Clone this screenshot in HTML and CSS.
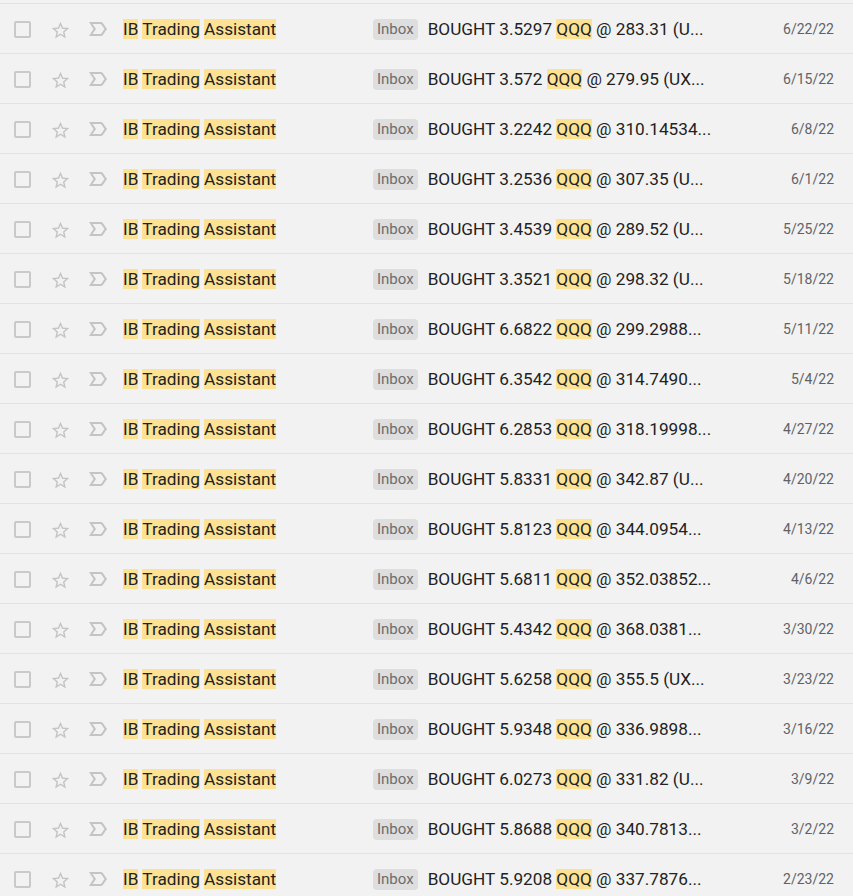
FILE: index.html
```html
<!DOCTYPE html>
<html>
<head>
<meta charset="utf-8">
<link rel="stylesheet" href="styles.css">
</head>
<body>
<div class="list">
  <div class="top-edge"></div>
  <div id="rows"></div>
</div>
<script>
var data = [
["3.5297","283.31 (U...","6/22/22"],
["3.572","279.95 (UX...","6/15/22"],
["3.2242","310.14534...","6/8/22"],
["3.2536","307.35 (U...","6/1/22"],
["3.4539","289.52 (U...","5/25/22"],
["3.3521","298.32 (U...","5/18/22"],
["6.6822","299.2988...","5/11/22"],
["6.3542","314.7490...","5/4/22"],
["6.2853","318.19998...","4/27/22"],
["5.8331","342.87 (U...","4/20/22"],
["5.8123","344.0954...","4/13/22"],
["5.6811","352.03852...","4/6/22"],
["5.4342","368.0381...","3/30/22"],
["5.6258","355.5 (UX...","3/23/22"],
["5.9348","336.9898...","3/16/22"],
["6.0273","331.82 (U...","3/9/22"],
["5.8688","340.7813...","3/2/22"],
["5.9208","337.7876...","2/23/22"]
];
var star = '<svg class="ico star" viewBox="0 0 24 24"><path d="M22 9.24l-7.19-.62L12 2 9.19 8.63 2 9.24l5.46 4.73L5.82 21 12 17.27 18.18 21l-1.63-7.03L22 9.24zM12 15.4l-3.76 2.27 1-4.28-3.32-2.88 4.38-.38L12 6.1l1.71 4.04 4.38.38-3.32 2.88 1 4.28L12 15.4z"/></svg>';
var imp = '<svg class="ico imp" viewBox="0 0 24 24"><path d="M15 19H3l4.5-7L3 5h12c.65 0 1.26.31 1.63.84L21 12l-4.37 6.16c-.37.52-.98.84-1.63.84zm-8.5-2H15l3.5-5L15 7H6.5l3.5 5-3.5 5z"/></svg>';
var html = '';
data.forEach(function(d){
  html += '<div class="row">' +
    '<span class="check"></span>' + star + imp +
    '<div class="sender"><span class="hl">IB</span> <span class="hl">Trading</span> <span class="hl">Assistant</span></div>' +
    '<span class="badge">Inbox</span>' +
    '<div class="subject">BOUGHT ' + d[0] + ' <span class="hl">QQQ</span> @ ' + d[1] + '</div>' +
    '<div class="date">' + d[2] + '</div>' +
  '</div>';
});
document.getElementById('rows').innerHTML = html;
</script>
</body>
</html>
```

FILE: styles.css
```css
html, body {
  margin: 0;
  padding: 0;
  background: #f2f2f2;
  overflow: hidden;
}
body {
  font-family: Roboto, "Noto Sans", sans-serif;
  color: #222;
  width: 853px;
  height: 896px;
}
.top-edge {
  height: 3px;
}
.row {
  display: flex;
  align-items: center;
  box-sizing: border-box;
  height: 50px;
  padding-top: 1px;
  border-top: 1px solid #e2e2e2;
  padding-left: 14px;
  padding-right: 19px;
}
.check {
  flex: none;
  width: 13px;
  height: 13px;
  border: 2px solid #c9c9c9;
  border-radius: 2px;
}
.ico {
  flex: none;
  fill: #c4c4c4;
}
.star {
  width: 21px;
  height: 21px;
  margin-left: 19px;
  margin-top: 3px;
}
.imp {
  width: 24px;
  height: 24px;
  margin-left: 15px;
}
.sender {
  flex: none;
  width: 250px;
  margin-left: 13px;
  font-size: 17.2px;
  white-space: nowrap;
}
.hl {
  background: #fde293;
}
.badge {
  flex: none;
  background: #dedede;
  color: #6d6d6d;
  font-size: 15px;
  line-height: 21px;
  padding: 0 4px;
  border-radius: 4px;
}
.subject {
  flex: 1;
  margin-left: 10px;
  font-size: 17.2px;
  white-space: nowrap;
  overflow: hidden;
}
.date {
  flex: none;
  font-size: 14px;
  color: #5f6368;
  text-align: right;
}
```
